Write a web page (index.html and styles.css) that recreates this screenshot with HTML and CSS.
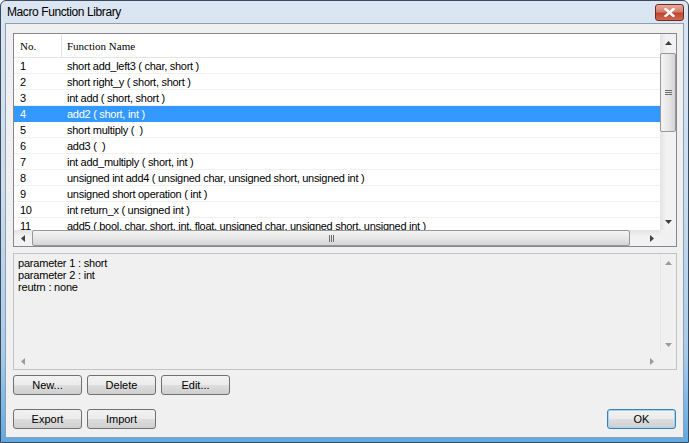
FILE: index.html
```html
<!DOCTYPE html>
<html lang="en">
<head>
    <meta charset="UTF-8">
    <title>Macro Function Library</title>
    <link rel="stylesheet" href="styles.css">
</head>
<body>
    <div class="window">
        <div class="titlebar">
            <span class="title">Macro Function Library</span>
            <div class="close-btn">
                <svg width="11" height="9" viewBox="0 0 11 9">
                    <path d="M1.5 1 L9.5 8 M9.5 1 L1.5 8" stroke="#fff" stroke-width="2.4" stroke-linecap="square"/>
                </svg>
            </div>
        </div>

        <div class="client">
            <div class="listbox">
                <div class="list-view">
                    <div class="list-head">
                        <div class="col-no">No.</div>
                        <div class="col-name">Function Name</div>
                    </div>
                    <div class="row"><div class="col-no">1</div><div class="col-name">short add_left3 ( char, short )</div></div>
                    <div class="row"><div class="col-no">2</div><div class="col-name">short right_y ( short, short )</div></div>
                    <div class="row"><div class="col-no">3</div><div class="col-name">int add ( short, short )</div></div>
                    <div class="row selected"><div class="col-no">4</div><div class="col-name">add2 ( short, int )</div></div>
                    <div class="row"><div class="col-no">5</div><div class="col-name">short multiply (&nbsp; )</div></div>
                    <div class="row"><div class="col-no">6</div><div class="col-name">add3 (&nbsp; )</div></div>
                    <div class="row"><div class="col-no">7</div><div class="col-name">int add_multiply ( short, int )</div></div>
                    <div class="row"><div class="col-no">8</div><div class="col-name">unsigned int add4 ( unsigned char, unsigned short, unsigned int )</div></div>
                    <div class="row"><div class="col-no">9</div><div class="col-name">unsigned short operation ( int )</div></div>
                    <div class="row"><div class="col-no">10</div><div class="col-name">int return_x ( unsigned int )</div></div>
                    <div class="row"><div class="col-no">11</div><div class="col-name">add5 ( bool, char, short, int, float, unsigned char, unsigned short, unsigned int )</div></div>
                </div>

                <div class="vscroll">
                    <div class="arrow-btn">
                        <svg width="7" height="4" viewBox="0 0 7 4"><path d="M0 4 L3.5 0 L7 4 Z" fill="#404040"/></svg>
                    </div>
                    <div class="vthumb">
                        <svg width="7" height="7" viewBox="0 0 7 7"><path d="M0 1.5 H7 M0 3.5 H7 M0 5.5 H7" stroke="#6d6d6d" stroke-width="1"/></svg>
                    </div>
                    <div class="track"></div>
                    <div class="arrow-btn">
                        <svg width="7" height="4" viewBox="0 0 7 4"><path d="M0 0 L3.5 4 L7 0 Z" fill="#404040"/></svg>
                    </div>
                </div>

                <div class="hscroll">
                    <div class="arrow-btn">
                        <svg width="4" height="7" viewBox="0 0 4 7"><path d="M4 0 L0 3.5 L4 7 Z" fill="#404040"/></svg>
                    </div>
                    <div class="hthumb">
                        <svg width="7" height="7" viewBox="0 0 7 7"><path d="M1.5 0 V7 M3.5 0 V7 M5.5 0 V7" stroke="#6d6d6d" stroke-width="1"/></svg>
                    </div>
                    <div class="track"></div>
                    <div class="arrow-btn">
                        <svg width="4" height="7" viewBox="0 0 4 7"><path d="M0 0 L4 3.5 L0 7 Z" fill="#404040"/></svg>
                    </div>
                </div>
                <div class="corner"></div>
            </div>

            <div class="descbox">
                <div class="desc-text">
                    <div>parameter 1 : short</div>
                    <div>parameter 2 : int</div>
                    <div>reutrn : none</div>
                </div>
                <div class="vscroll disabled">
                    <div class="arrow-btn">
                        <svg width="7" height="4" viewBox="0 0 7 4"><path d="M0 4 L3.5 0 L7 4 Z" fill="#9a9a9a"/></svg>
                    </div>
                    <div class="track"></div>
                    <div class="arrow-btn">
                        <svg width="7" height="4" viewBox="0 0 7 4"><path d="M0 0 L3.5 4 L7 0 Z" fill="#9a9a9a"/></svg>
                    </div>
                </div>
                <div class="hscroll disabled">
                    <div class="arrow-btn">
                        <svg width="4" height="7" viewBox="0 0 4 7"><path d="M4 0 L0 3.5 L4 7 Z" fill="#9a9a9a"/></svg>
                    </div>
                    <div class="track"></div>
                    <div class="arrow-btn">
                        <svg width="4" height="7" viewBox="0 0 4 7"><path d="M0 0 L4 3.5 L0 7 Z" fill="#9a9a9a"/></svg>
                    </div>
                </div>
                <div class="corner"></div>
            </div>

            <div class="btn-row">
                <button class="btn">New...</button>
                <button class="btn">Delete</button>
                <button class="btn">Edit...</button>
            </div>

            <div class="btn-row last">
                <button class="btn">Export</button>
                <button class="btn">Import</button>
                <button class="btn default">OK</button>
            </div>
        </div>
    </div>
</body>
</html>
```

FILE: styles.css
```css
body {
    margin: 0;
    font-family: 'Liberation Sans', Arial, sans-serif;
    font-size: 11px;
    color: #000;
    background: #fff;
}
.window {
    width: 689px;
    height: 443px;
    box-sizing: border-box;
    border: 1px solid #3b4a5a;
    border-radius: 6px 6px 0 0;
    padding: 0 4px 4px 4px;
    display: flex;
    flex-direction: column;
    background: linear-gradient(to bottom, #dbe6f2 0%, #c9dbee 45%, #a8cbea 80%, #5eaae4 100%);
}
.titlebar {
    height: 22px;
    display: flex;
    justify-content: space-between;
    align-items: flex-start;
}
.title {
    font-family: 'Liberation Sans', Arial, sans-serif;
    font-size: 12px;
    letter-spacing: -0.4px;
    margin: 4px 0 0 2px;
    color: #000;
}
.close-btn {
    width: 27px;
    height: 15px;
    margin-top: 3px;
    border: 1px solid #6b2a23;
    border-radius: 3px;
    background: linear-gradient(to bottom, #e9a99b 0%, #d47f6e 45%, #c1432f 55%, #cf6a52 100%);
    display: flex;
    align-items: center;
    justify-content: center;
}
.client {
    flex: 1;
    background: #f0f0f0;
    border: 1px solid #8e9fb3;
    padding: 9px 6px 8px 7px;
    display: flex;
    flex-direction: column;
}

/* list view */
.listbox, .descbox {
    border: 1px solid #828790;
    display: grid;
    grid-template-columns: 1fr 16px;
}
.listbox {
    height: 212px;
    grid-template-rows: 196px 16px;
    background: #fff;
}
.list-view {
    overflow: hidden;
}
.list-head, .row {
    display: flex;
    white-space: nowrap;
}
.list-head {
    height: 22px;
    margin-top: 1px;
    border-bottom: 1px solid #e5e5e5;
    align-items: center;
    font-family: 'Liberation Serif', 'Times New Roman', serif;
    font-size: 11px;
}
.list-head .col-no {
    border-right: 1px solid #e5e5e5;
    height: 22px;
    line-height: 22px;
}
.col-no {
    width: 41px;
    padding-left: 6px;
    flex-shrink: 0;
}
.col-name {
    padding-left: 5px;
}
.row {
    height: 15px;
    line-height: 17px;
    border-bottom: 1px solid #f0f0f0;
    letter-spacing: -0.28px;
}
.row .col-name {
    padding-left: 6px;
}
.row.selected {
    background: #3399ff;
    color: #fff;
    border-bottom-color: #3399ff;
}

/* scrollbars */
.vscroll {
    display: flex;
    flex-direction: column;
    background: linear-gradient(to right, #e3e3e3, #f2f2f2 40%, #f2f2f2);
}
.hscroll {
    display: flex;
    background: linear-gradient(to bottom, #e3e3e3, #f2f2f2 40%, #f2f2f2);
}
.vscroll .arrow-btn {
    height: 17px;
    display: flex;
    align-items: center;
    justify-content: center;
}
.hscroll .arrow-btn {
    width: 17px;
    display: flex;
    align-items: center;
    justify-content: center;
}
.track {
    flex: 1;
}
.vthumb {
    height: 77px;
    margin-top: 2px;
    border: 1px solid #979797;
    border-radius: 2px;
    background: linear-gradient(to right, #f4f4f4, #e7e7e7 50%, #d4d4d4);
    display: flex;
    align-items: center;
    justify-content: center;
}
.hthumb {
    width: 596px;
    margin-left: 1px;
    border: 1px solid #979797;
    border-radius: 2px;
    background: linear-gradient(to bottom, #f4f4f4, #e7e7e7 50%, #d4d4d4);
    display: flex;
    align-items: center;
    justify-content: center;
}
.corner {
    background: #f0f0f0;
}
.disabled {
    background: #f0f0f0;
}
.vscroll.disabled {
    border-left: 1px solid #e6e6e6;
}

/* description */
.descbox {
    height: 115px;
    margin-top: 6px;
    grid-template-rows: 1fr 16px;
    background: #f0f0f0;
    border-color: #c3c3c3;
}
.desc-text {
    padding: 3px 4px;
    line-height: 12px;
    letter-spacing: -0.2px;
}

/* buttons */
.btn-row {
    display: flex;
    gap: 5px;
    margin-top: 5px;
}
.btn-row.last {
    margin-top: 14px;
}
.btn {
    width: 69px;
    height: 20px;
    padding: 0;
    border: 1px solid #707070;
    border-radius: 3px;
    background: linear-gradient(to bottom, #f2f2f2 0%, #ebebeb 48%, #dddddd 52%, #cfcfcf 100%);
    font-family: 'Liberation Sans', Arial, sans-serif;
    font-size: 11px;
    color: #000;
}
.btn.default {
    margin-left: auto;
    margin-right: 1px;
    border-color: #3c7fb1;
    box-shadow: inset 0 0 0 1px #9cd7f5;
}
```
